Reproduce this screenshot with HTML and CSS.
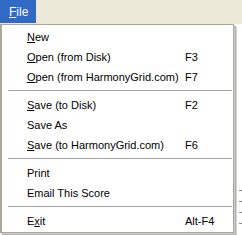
FILE: index.html
```html
<!DOCTYPE html>
<html>
<head>
<meta charset="utf-8">
<link rel="stylesheet" href="styles.css">
</head>
<body>
<div class="bar">
  <div class="bar-item active"><u>F</u>ile</div>
</div>
<div class="stage">
  <div class="menu">
    <div class="item"><span class="label"><u>N</u>ew</span><span class="key"></span></div>
    <div class="item"><span class="label"><u>O</u>pen (from Disk)</span><span class="key">F3</span></div>
    <div class="item"><span class="label"><u>O</u>pen (from HarmonyGrid.com)</span><span class="key">F7</span></div>
    <div class="sep"></div>
    <div class="item"><span class="label"><u>S</u>ave (to Disk)</span><span class="key">F2</span></div>
    <div class="item"><span class="label">Save As</span><span class="key"></span></div>
    <div class="item"><span class="label"><u>S</u>ave (to HarmonyGrid.com)</span><span class="key">F6</span></div>
    <div class="sep"></div>
    <div class="item"><span class="label">Print</span><span class="key"></span></div>
    <div class="item"><span class="label">Email This Score</span><span class="key"></span></div>
    <div class="sep"></div>
    <div class="item"><span class="label">E<u>x</u>it</span><span class="key">Alt-F4</span></div>
  </div>
  <div class="side">
    <div class="tick"></div>
    <div class="tick"></div>
    <div class="tick"></div>
    <div class="tick"></div>
  </div>
</div>
</body>
</html>
```
FILE: styles.css
```css
html, body {
  margin: 0;
  padding: 0;
}
body {
  width: 242px;
  height: 235px;
  overflow: hidden;
  background: #ffffff;
  font-family: "Liberation Sans", Arial, sans-serif;
  font-size: 11px;
  color: #000;
}
.bar {
  height: 24px;
  background: #ece9d8;
  display: flex;
}
.bar-item {
  width: 36px;
  height: 23px;
  line-height: 24px;
  padding-left: 9px;
  box-sizing: border-box;
  font-size: 12px;
  white-space: nowrap;
}
.bar-item.active {
  background: #316ac5;
  color: #fff;
}
.stage {
  display: flex;
  height: 211px;
}
.menu {
  width: 234px;
  height: 209px;
  flex: none;
  box-sizing: border-box;
  border: 1px solid #aca899;
  border-left: 2px solid #aca899;
  background: #fff;
  display: flex;
  flex-direction: column;
  padding-top: 2px;
  box-shadow: 1px 1px 0 #c9c9c9, 2px 2px 0 #b2b2b2, 3px 3px 0 #d4d4d4;
}
.item {
  height: 20px;
  flex: none;
  display: flex;
  align-items: center;
  padding-left: 25px;
  white-space: nowrap;
  line-height: 20px;
}
.label {
  width: 158px;
  flex: none;
}
.key {
  flex: none;
}
.sep {
  height: 1px;
  flex: none;
  background: #a5a5a5;
  margin: 3px 1px 4px 6px;
}
.side {
  flex: 1;
  display: flex;
  flex-direction: column;
  align-items: flex-end;
  padding-top: 166px;
  gap: 10px;
}
.tick {
  width: 3px;
  height: 1px;
  background: #8a8a8a;
}
```
